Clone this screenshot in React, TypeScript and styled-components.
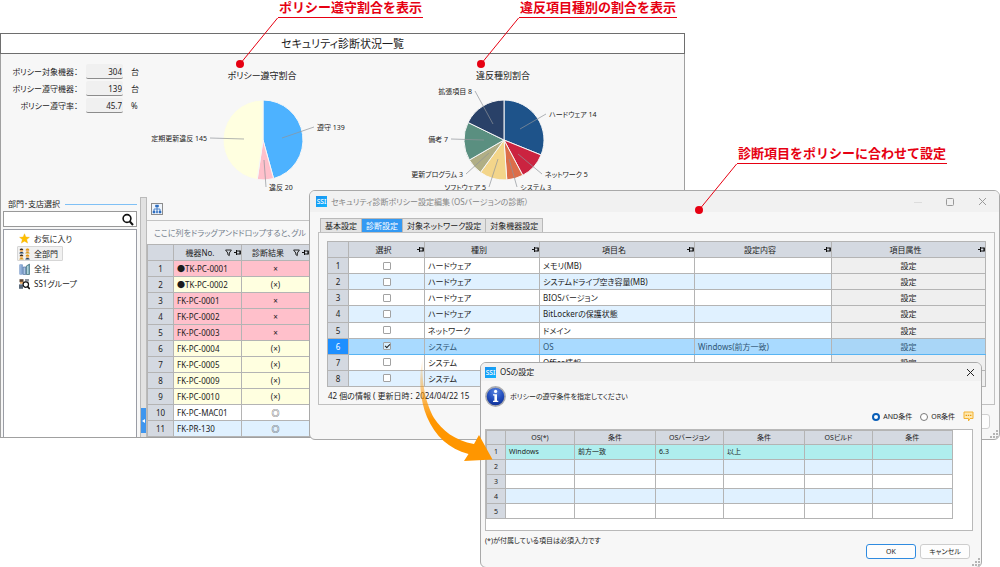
import React from "react";
import styled, { createGlobalStyle, css } from "styled-components";

const GlobalStyle = createGlobalStyle`
  *, *::before, *::after { box-sizing: border-box; }
  body { margin: 0; background: #fff; }
  body, table {
    font-family: "Noto Sans", "Noto Sans CJK JP", sans-serif;
    font-size: 8px;
    line-height: 12px;
    color: #1c1c1c;
    font-feature-settings: "palt";
  }
  table, button, input { font: inherit; color: inherit; font-feature-settings: inherit; }
  button { padding: 0; margin: 0; border: 0; background: none; }
  input { margin: 0; }
  h1, h2, p, ul { margin: 0; padding: 0; font-size: inherit; font-weight: 400; list-style: none; }
  svg { display: block; flex: none; }
`;

const c = {
  line: "#b4b4b4",
  head: "#d4d9e1",
  panel: "#f7f7f7",
  red: "#e60012",
};

const Desktop = styled.main`
  position: relative;
  min-height: 100vh;
  padding-top: 33px;
  overflow: hidden;
`;

/* ---------- main window ---------- */

const MainWindow = styled.section`
  width: 68.5%;
  border: 1px solid #a0a0a0;
  border-top: 0;
  background: ${c.panel};
`;

const MainTitle = styled.h1`
  margin: 0 -1px;
  border: 1px solid #6e6e6e;
  background: #fff;
  text-align: center;
  font-size: 11px;
  line-height: 19px;
`;

const Summary = styled.div`
  display: flex;
  height: 143px;
`;

const Stats = styled.div`
  display: flex;
  flex-direction: column;
  gap: 2px;
  width: 139px;
  padding-top: 10px;
`;

const Stat = styled.label`
  display: grid;
  grid-template-columns: 77px 37px 1fr;
  column-gap: 8px;
  align-items: center;
  text-align: right;

  input {
    width: 100%;
    height: 15px;
    padding: 0 1px;
    border: 0;
    border-bottom: 1px solid #8c8c8c;
    border-radius: 2px;
    background: #f0f0f0;
    text-align: right;
  }
  span:last-child { text-align: left; }
`;

const ChartBox = styled.figure<{ $width: number }>`
  width: ${(p) => p.$width}px;
  margin: 0;
  padding-top: 15px;
`;

const ChartTitle = styled.h2`
  font-size: 9px;
  line-height: 14px;
  text-align: center;
`;

const Lower = styled.div`
  display: grid;
  grid-template-columns: 139px 7px 1fr;
`;

const Side = styled.aside`
  display: flex;
  flex-direction: column;
  padding: 0 3px 0 2px;
`;

const SideHeading = styled.h2`
  display: flex;
  align-items: center;
  gap: 5px;
  padding-left: 5px;
  line-height: 14px;

  &::after {
    content: "";
    flex: 1;
    border-top: 1px solid #7fc0f5;
  }
`;

const SearchBox = styled.div`
  display: flex;
  align-items: center;
  height: 16px;
  padding-right: 2px;
  border: 1px solid #999;
  background: #fff;

  input {
    flex: 1;
    min-width: 0;
    border: 0;
    outline: 0;
    background: none;
  }
`;

const Tree = styled.ul`
  flex: 1;
  margin-top: 2px;
  padding: 1px 0 0 13px;
  border: 1px solid #9a9da5;
  border-bottom: 0;
  background: #fff;
`;

const TreeItem = styled.button<{ $selected?: boolean }>`
  display: flex;
  align-items: center;
  gap: 4px;
  height: 15px;
  padding: 0 4px 0 1px;
  border: 1px solid ${(p) => (p.$selected ? "#d6d6d6" : "transparent")};
  border-radius: 1px;
  background: ${(p) => (p.$selected ? "#f1f1f1" : "none")};
`;

const Splitter = styled.div`
  display: flex;
  flex-direction: column;
  justify-content: flex-end;
  padding-bottom: 4px;
  border: 1px solid #bbb;
  border-bottom: 0;
  background: #e2e2e2;
`;

const CollapseButton = styled.button`
  display: grid;
  place-items: center;
  height: 25px;
  background: #3f96ee;
`;

const Devices = styled.div`
  min-width: 0;
  overflow: hidden;
`;

const DeviceTools = styled.div`
  display: flex;
  height: 24px;
  padding: 6px 0 0 4px;
  border-bottom: 1px solid #c4c4c4;
`;

const ToolButton = styled.button`
  display: grid;
  place-items: center;
  width: 12px;
  height: 12px;
  border: 1px solid #8c8c8c;
  background: #eef4fb;
`;

const GroupHint = styled.p`
  padding-left: 7px;
  line-height: 23px;
  color: #74808c;
  white-space: nowrap;
`;

/* ---------- tables ---------- */

const Grid = styled.table<{ $height: number; $row: number; $width?: string }>`
  width: ${(p) => p.$width ?? "100%"};
  height: ${(p) => p.$height}px;
  table-layout: fixed;
  border-collapse: collapse;
  background: #fff;

  tr { height: ${(p) => p.$row}px; }
  th, td {
    padding: 0 3px;
    border: 1px solid ${c.line};
    line-height: 11px;
    font-weight: 400;
    text-align: left;
    white-space: nowrap;
    overflow: hidden;
  }
  th { background: ${c.head}; text-align: center; }
  th[scope="row"] { padding: 0; }
`;

const Row = styled.tr<{ $tone?: string; $selected?: boolean }>`
  background: ${(p) => p.$tone ?? "#fff"};

  ${(p) =>
    p.$selected &&
    css`
      background: #a9daff;
      td { border-top-color: #58b4f3; border-bottom-color: #58b4f3; color: #2f5675; }
      th[scope="row"] { background: #1e8fff; color: #fff; }
    `}
`;

const CenterCell = styled.td`
  && { text-align: center; }
`;

const ActionCell = styled.td<{ $selected?: boolean }>`
  && { padding: 0; background: ${(p) => (p.$selected ? "#a9d6f7" : "#efefef")}; }

  button { display: block; width: 100%; line-height: 11px; }
`;

const HeadLabel = styled.div`
  display: flex;
  align-items: center;
  gap: 2px;
  margin-right: -3px;

  span { flex: 1; }
`;

const Check = styled.input`
  appearance: none;
  display: block;
  width: 8px;
  height: 8px;
  margin: 0 auto;
  border: 1px solid #a2a2a2;
  border-radius: 1px;
  background: #fff;

  &:checked { background: #d8efff; }
  &:checked::after {
    content: "";
    display: block;
    width: 5px;
    height: 3px;
    margin: 1px;
    border: solid #222;
    border-width: 0 0 1px 1px;
    transform: rotate(-45deg);
  }
`;

/* ---------- dialogs ---------- */

const Dialog = styled.section`
  position: absolute;
  border: 1px solid #a9a9a9;
  border-radius: 6px;
  background: ${c.panel};
  overflow: hidden;
`;

const PolicyDialog = styled(Dialog)`
  top: 190px;
  left: 30.9%;
  right: 0;
  padding-bottom: 34px;
`;

const OsDialog = styled(Dialog)`
  top: 362px;
  left: 48%;
  right: 1.8%;
  font-size: 7px;
`;

const TitleBar = styled.header<{ $muted?: boolean }>`
  display: flex;
  align-items: center;
  gap: 4px;
  height: ${(p) => (p.$muted ? 21 : 18)}px;
  padding: 0 ${(p) => (p.$muted ? 11 : 5)}px 0 ${(p) => (p.$muted ? 6 : 4)}px;
  background: #f1f1f1;
  font-size: 8px;
  color: ${(p) => (p.$muted ? "#858585" : "#222")};

  h2 { flex: 1; }
`;

const WindowButton = styled.button`
  display: grid;
  place-items: center;
  width: 12px;
  height: 12px;
`;

const WindowButtons = styled.div`
  display: flex;
  gap: 20px;
`;

const Tabs = styled.div`
  display: flex;
  margin: 6px 0 0 10px;
`;

const Tab = styled.button<{ $active?: boolean }>`
  height: 14px;
  padding: 0 4px;
  border: solid #b9b9b9;
  border-width: 1px 1px 0 0;
  background: ${(p) => (p.$active ? "#3399f3" : "#e3e3e3")};
  color: ${(p) => (p.$active ? "#fff" : "#1c1c1c")};

  &:first-child { border-left-width: 1px; }
`;

const TabPanel = styled.div`
  margin: 0 4px 0 8px;
  padding: 8px 8px 0 8px;
  border: 1px solid #c0c0c0;
`;

const Status = styled.p`
  padding-left: 1px;
  line-height: 17px;
`;

const BackButton = styled.button`
  position: absolute;
  right: 9px;
  bottom: 10px;
  width: 50px;
  height: 15px;
  border: 1px solid #cfcfcf;
  border-radius: 3px;
  background: #fdfdfd;
`;

const Grip = styled.svg`
  position: absolute;
  right: 1px;
  bottom: 1px;
`;

const Message = styled.div`
  display: flex;
  align-items: center;
  gap: 4px;
  padding: 5px 4px 0;
`;

const Options = styled.div`
  display: flex;
  align-items: center;
  justify-content: flex-end;
  gap: 8px;
  height: 22px;
  padding: 0 7px 3px 0;

  label { display: flex; align-items: center; gap: 3px; }
`;

const Radio = styled.input`
  appearance: none;
  width: 8px;
  height: 8px;
  border: 1px solid #7a7a7a;
  border-radius: 50%;
  background: #fff;

  &:checked { border: 2px solid #0a5fb8; }
`;

const OsPanel = styled.div`
  margin: 0 8px 0 4px;
  padding-bottom: 11px;
  border: 1px solid #b9b9b9;
  background: #fff;
`;

const Note = styled.p`
  padding: 4px 4px 0;
`;

const Actions = styled.footer`
  display: flex;
  justify-content: flex-end;
  gap: 4px;
  margin-top: -3px;
  padding: 0 11px 8px;
`;

const ActionButton = styled.button<{ $primary?: boolean }>`
  width: 50px;
  height: 15px;
  border: 1px solid ${(p) => (p.$primary ? "#2f8be0" : "#cdcdcd")};
  border-radius: 3px;
  background: #fdfdfd;
`;

/* ---------- annotations ---------- */

const CalloutBox = styled.div<{ $left: string; $top: number }>`
  position: absolute;
  z-index: 3;
  left: ${(p) => p.$left};
  top: ${(p) => p.$top}px;
`;

const CalloutText = styled.p`
  margin-left: 42px;
  padding: 0 1px 3px;
  border-bottom: 1px solid ${c.red};
  color: ${c.red};
  font-size: 13px;
  font-weight: 700;
  line-height: 14px;
  white-space: nowrap;
  font-feature-settings: normal;
`;

const Arrow = styled.svg`
  position: absolute;
  z-index: 3;
  left: 41.8%;
  top: 356px;
`;

/* ---------- small drawings ---------- */

const Pin = () => (
  <svg width="7" height="7" viewBox="0 0 7 7" fill="none" stroke="#111">
    <path d="M0 3.5H2.5M2.5 1V6M2.5 2H6V5H2.5M6.3 1.5V5.5" />
  </svg>
);

const Funnel = () => (
  <svg width="7" height="8" viewBox="0 0 7 8" fill="none" stroke="#222">
    <path d="M.6 1H6.4L4.3 4V6.6L2.8 5.6V4Z" />
  </svg>
);

const Logo = ({ size }: { size: number }) => (
  <svg width={size} height={size} viewBox="0 0 11 11">
    <defs>
      <linearGradient id="logo" x1="0" y1="0" x2="1" y2="1">
        <stop offset="0" stopColor="#1a8fee" />
        <stop offset="1" stopColor="#12b6ff" />
      </linearGradient>
    </defs>
    <rect width="11" height="11" fill="url(#logo)" />
    <text x="5.5" y="8" textAnchor="middle" fontSize="6.5" fontWeight="500" fill="#fff">
      SSI
    </text>
  </svg>
);

const Close = ({ color }: { color: string }) => (
  <svg width="9" height="9" viewBox="0 0 9 9" stroke={color}>
    <path d="M1 1L8 8M8 1L1 8" />
  </svg>
);

const GripDots = () => (
  <Grip width="8" height="8" viewBox="0 0 8 8" fill="#b5b5b5">
    <path d="M6 0h2v2h-2zM3 3h2v2h-2zM6 3h2v2h-2zM0 6h2v2h-2zM3 6h2v2h-2zM6 6h2v2h-2z" />
  </Grip>
);

const SearchIcon = () => (
  <svg width="13" height="13" viewBox="0 0 13 13" fill="none" stroke="#111">
    <circle cx="6" cy="5.5" r="3.9" strokeWidth="1.6" />
    <path d="M8.8 8.5L12 12" strokeWidth="2" />
  </svg>
);

const StarIcon = () => (
  <svg width="11" height="11" viewBox="0 0 12 12" fill="#ffc000" stroke="#f0ae00" strokeWidth=".4">
    <path d="M6 .8L7.5 4.4L11.4 4.7L8.4 7.2L9.4 11L6 8.9L2.6 11L3.6 7.2L.6 4.7L4.5 4.4Z" />
  </svg>
);

const PeopleIcon = () => (
  <svg width="11" height="12" viewBox="0 0 11 12">
    {[0, 6].map((x) =>
      [0, 6].map((y) => (
        <g key={`${x}-${y}`} transform={`translate(${x} ${y})`}>
          <path d="M.3 5.6C.3 3.6 4.7 3.6 4.7 5.6Z" fill={x === y ? "#27405e" : "#d99a1c"} />
          <circle cx="2.5" cy="2.4" r="1.7" fill="#e9b06a" />
          <path d="M.7 2.1C.7-.1 4.3-.1 4.3 2.1Z" fill={x ? "#e39a12" : "#3a2a1c"} />
        </g>
      ))
    )}
  </svg>
);

const CompanyIcon = () => (
  <svg width="11" height="12" viewBox="0 0 11 12">
    <path d="M.5 1.5h3.2v10H.5z" fill="#4d79b8" />
    <path d="M1.5 2v9M2.7 2v9" stroke="#c9dcf2" strokeWidth=".6" />
    <path d="M4.2 4h2.5v7.5H4.2z" fill="#a9c4e4" stroke="#3c5f94" strokeWidth=".6" />
    <path d="M7.3 3L10.5 1v10.5H7.3z" fill="#6fa7b8" stroke="#2d5a66" strokeWidth=".6" />
    <path d="M8.8 3v8" stroke="#e4f3f5" strokeWidth=".8" />
  </svg>
);

const GroupIcon = () => (
  <svg width="11" height="12" viewBox="0 0 11 12">
    <path d="M.5 1.2h4v3h-4z" fill="#574130" />
    <path d="M1 3.8h3.2v2H1z" fill="#e2a868" />
    <path d="M0 6.4h4v4.4H0z" fill="#5a6a7c" />
    <path d="M6 1h4v2.5H6z" fill="#8e949c" />
    <circle cx="6.8" cy="6.6" r="2.7" fill="#fff" stroke="#111" strokeWidth="1.2" />
    <path d="M8.6 8.6L10.8 11" stroke="#111" strokeWidth="1.6" />
  </svg>
);

const InfoIcon = () => (
  <svg width="21" height="21" viewBox="0 0 21 21">
    <defs>
      <radialGradient id="info" cx=".5" cy=".25" r=".8">
        <stop offset="0" stopColor="#5b86e0" />
        <stop offset=".5" stopColor="#2450bf" />
        <stop offset="1" stopColor="#0c2a8c" />
      </radialGradient>
    </defs>
    <circle cx="10.5" cy="10.5" r="9.6" fill="url(#info)" stroke="#a9abb0" strokeWidth="1.6" />
    <circle cx="10.6" cy="5.4" r="1.6" fill="#fff" />
    <path d="M8 8.2H12V14.8H13.3V16H8V14.8H9.4V9.4H8Z" fill="#fff" />
  </svg>
);

const ChatIcon = () => (
  <svg width="11" height="11" viewBox="0 0 11 11">
    <path d="M1 1H10V7.5H7L5.5 10V7.5H1Z" fill="#ffe9b0" stroke="#f2b233" strokeLinejoin="round" />
    <path d="M2.6 4.3h1.4M4.8 4.3h1.4M7 4.3h1.4" stroke="#e89a10" strokeWidth="1.3" />
  </svg>
);

/* ---------- charts ---------- */

type Slice = {
  label: string;
  value: number;
  color: string;
  from: [number, number];
  to: [number, number];
};

function Pie({ slices, viewBox, cx, cy, r }: { slices: Slice[]; viewBox: [number, number, number, number]; cx: number; cy: number; r: number }) {
  const total = slices.reduce((sum, s) => sum + s.value, 0);
  const at = (v: number) => {
    const a = (v / total) * Math.PI * 2;
    return `${(cx + r * Math.sin(a)).toFixed(2)} ${(cy - r * Math.cos(a)).toFixed(2)}`;
  };
  let acc = 0;
  return (
    <svg width={viewBox[2]} height={viewBox[3]} viewBox={viewBox.join(" ")}>
      {slices.map((s) => {
        const start = acc;
        acc += s.value;
        const large = s.value / total > 0.5 ? 1 : 0;
        return (
          <path
            key={s.label}
            d={`M${cx} ${cy}L${at(start)}A${r} ${r} 0 ${large} 1 ${at(acc)}Z`}
            fill={s.color}
            stroke="#f7f7f7"
            strokeWidth="1"
          />
        );
      })}
      {slices.map((s) => {
        const right = s.to[0] > cx;
        return (
          <g key={s.label}>
            <path d={`M${s.from.join(" ")}L${s.to.join(" ")}`} stroke="#8f9499" strokeWidth=".7" />
            <text x={s.to[0] + (right ? 3 : -3)} y={s.to[1] + 3} fontSize="7" fill="#1c1c1c" textAnchor={right ? "start" : "end"}>
              {s.label} {s.value}
            </text>
          </g>
        );
      })}
    </svg>
  );
}

const complianceSlices: Slice[] = [
  { label: "遵守", value: 139, color: "#4db2ff", from: [282, 138], to: [314, 127] },
  { label: "違反", value: 20, color: "#ffc0cb", from: [264, 160], to: [266, 187] },
  { label: "定期更新違反", value: 145, color: "#ffffe0", from: [244, 139], to: [210, 138] },
];

const violationSlices: Slice[] = [
  { label: "ハードウェア", value: 14, color: "#1e538a", from: [520, 129], to: [546, 114] },
  { label: "ネットワーク", value: 5, color: "#cb2340", from: [518, 154], to: [542, 174] },
  { label: "システム", value: 3, color: "#dc6e49", from: [509, 159], to: [517, 187] },
  { label: "ソフトウェア", value: 5, color: "#f3d58a", from: [498, 159], to: [489, 187] },
  { label: "更新プログラム", value: 3, color: "#b0ae85", from: [489, 153], to: [466, 174] },
  { label: "備考", value: 7, color: "#5a8f80", from: [484, 140], to: [451, 139] },
  { label: "拡張項目", value: 8, color: "#294168", from: [493, 124], to: [475, 91] },
];

/* ---------- data ---------- */

const stats = [
  ["ポリシー対象機器：", "304", "台"],
  ["ポリシー遵守機器：", "139", "台"],
  ["ポリシー遵守率：", "45.7", "%"],
];

const PINK = "#ffc0cb";
const CREAM = "#ffffe0";
const SKY = "#e0f1ff";

const devices: [string, string, string][] = [
  ["●TK-PC-0001", "×", PINK],
  ["●TK-PC-0002", "(×)", CREAM],
  ["FK-PC-0001", "×", PINK],
  ["FK-PC-0002", "×", PINK],
  ["FK-PC-0003", "×", PINK],
  ["FK-PC-0004", "(×)", CREAM],
  ["FK-PC-0005", "(×)", CREAM],
  ["FK-PC-0009", "(×)", CREAM],
  ["FK-PC-0010", "(×)", CREAM],
  ["FK-PC-MAC01", "◎", "#fff"],
  ["FK-PR-130", "◎", SKY],
];

const policies: [string, string, string][] = [
  ["ハードウェア", "メモリ(MB)", ""],
  ["ハードウェア", "システムドライブ空き容量(MB)", ""],
  ["ハードウェア", "BIOSバージョン", ""],
  ["ハードウェア", "BitLockerの保護状態", ""],
  ["ネットワーク", "ドメイン", ""],
  ["システム", "OS", "Windows(前方一致)"],
  ["システム", "Office情報", ""],
  ["システム", "", ""],
];

const osRows = [["Windows", "前方一致", "6.3", "以上", "", ""], [], [], [], []];

function Callout({ left, top, children }: { left: string; top: number; children: string }) {
  return (
    <CalloutBox $left={left} $top={top}>
      <CalloutText>{children}</CalloutText>
      <svg width="46" height="51" viewBox="0 1 46 51">
        <path d="M42 .5L4 47" stroke={c.red} />
        <circle cx="4" cy="47" r="4" fill={c.red} />
      </svg>
    </CalloutBox>
  );
}

export default function App() {
  return (
    <Desktop>
      <GlobalStyle />

      <MainWindow>
        <MainTitle>セキュリティ診断状況一覧</MainTitle>
        <Summary>
          <Stats>
            {stats.map(([label, value, unit]) => (
              <Stat key={label}>
                <span>{label}</span>
                <input readOnly value={value} />
                <span>{unit}</span>
              </Stat>
            ))}
          </Stats>
          <ChartBox $width={244}>
            <ChartTitle>ポリシー遵守割合</ChartTitle>
            <Pie slices={complianceSlices} viewBox={[140, 83, 244, 112]} cx={263} cy={140} r={40} />
          </ChartBox>
          <ChartBox $width={238}>
            <ChartTitle>違反種別割合</ChartTitle>
            <Pie slices={violationSlices} viewBox={[384, 83, 238, 112]} cx={504} cy={140} r={40} />
          </ChartBox>
        </Summary>

        <Lower>
          <Side>
            <SideHeading>部門･支店選択</SideHeading>
            <SearchBox>
              <input type="text" aria-label="検索" />
              <SearchIcon />
            </SearchBox>
            <Tree>
              <li><TreeItem><StarIcon />お気に入り</TreeItem></li>
              <li><TreeItem $selected><PeopleIcon />全部門</TreeItem></li>
              <li><TreeItem><CompanyIcon />全社</TreeItem></li>
              <li><TreeItem><GroupIcon />SS1グループ</TreeItem></li>
            </Tree>
          </Side>
          <Splitter>
            <CollapseButton aria-label="閉じる">
              <svg width="4" height="6" viewBox="0 0 4 6"><path d="M0 3L3 1V5Z" fill="#fff" /></svg>
            </CollapseButton>
          </Splitter>
          <Devices>
            <DeviceTools>
              <ToolButton aria-label="階層">
                <svg width="10" height="10" viewBox="0 0 10 10" fill="#2f6fc0" stroke="#2f6fc0">
                  <path d="M3.5 1h3v2h-3zM1 7h2v2H1zM4.5 7h1v2h-1zM7 7h2v2H7z" strokeWidth=".5" />
                  <path d="M5 3V7M2 7V5H8V7" fill="none" strokeWidth=".8" />
                </svg>
              </ToolButton>
            </DeviceTools>
            <GroupHint>ここに列をドラッグアンドドロップすると、グル</GroupHint>
            <Grid $height={193} $row={16} $width="162px">
              <colgroup><col width="26" /><col width="68" /><col width="68" /></colgroup>
              <thead>
                <tr>
                  <th />
                  <th><HeadLabel><span>機器No.</span><Funnel /><Pin /></HeadLabel></th>
                  <th><HeadLabel><span>診断結果</span><Funnel /><Pin /></HeadLabel></th>
                </tr>
              </thead>
              <tbody>
                {devices.map(([name, result, tone], i) => (
                  <Row key={name} $tone={tone}>
                    <th scope="row">{i + 1}</th>
                    <td>{name}</td>
                    <CenterCell>{result}</CenterCell>
                  </Row>
                ))}
              </tbody>
            </Grid>
          </Devices>
        </Lower>
      </MainWindow>

      <PolicyDialog>
        <TitleBar $muted>
          <Logo size={11} />
          <h2>セキュリティ診断ポリシー設定編集（OSバージョンの診断）</h2>
          <WindowButtons>
            <WindowButton aria-label="最小化">
              <svg width="8" height="8" viewBox="0 0 8 8" stroke="#dcdcdc"><path d="M0 4.5H8" /></svg>
            </WindowButton>
            <WindowButton aria-label="最大化">
              <svg width="8" height="8" viewBox="0 0 8 8" fill="none" stroke="#9a9a9a"><rect x=".5" y=".5" width="7" height="7" rx="1" /></svg>
            </WindowButton>
            <WindowButton aria-label="閉じる"><Close color="#9a9a9a" /></WindowButton>
          </WindowButtons>
        </TitleBar>
        <Tabs role="tablist">
          <Tab role="tab">基本設定</Tab>
          <Tab role="tab" $active>診断設定</Tab>
          <Tab role="tab">対象ネットワーク設定</Tab>
          <Tab role="tab">対象機器設定</Tab>
        </Tabs>
        <TabPanel>
          <Grid $height={146} $row={16}>
            <colgroup>
              <col width="21" /><col width="76" /><col width="115" /><col width="155" /><col width="137" /><col />
            </colgroup>
            <thead>
              <tr>
                <th />
                {["選択", "種別", "項目名", "設定内容", "項目属性"].map((h) => (
                  <th key={h}><HeadLabel><span>{h}</span><Pin /></HeadLabel></th>
                ))}
              </tr>
            </thead>
            <tbody>
              {policies.map(([kind, name, content], i) => {
                const selected = i === 5;
                return (
                  <Row key={i} $tone={i % 2 ? SKY : "#fff"} $selected={selected}>
                    <th scope="row">{i + 1}</th>
                    <td><Check type="checkbox" aria-label={`${kind} ${name}`} defaultChecked={selected} /></td>
                    <td>{kind}</td>
                    <td>{name}</td>
                    <td>{content}</td>
                    <ActionCell $selected={selected}><button>設定</button></ActionCell>
                  </Row>
                );
              })}
            </tbody>
          </Grid>
          <Status>42 個の情報 ( 更新日時： 2024/04/22 15</Status>
        </TabPanel>
        <BackButton aria-label="キャンセル" />
        <GripDots />
      </PolicyDialog>

      <OsDialog>
        <TitleBar>
          <Logo size={11} />
          <h2>OSの設定</h2>
          <WindowButton aria-label="閉じる"><Close color="#222" /></WindowButton>
        </TitleBar>
        <Message>
          <InfoIcon />
          <p>ポリシーの遵守条件を指定してください</p>
        </Message>
        <Options>
          <label><Radio type="radio" name="join" defaultChecked />AND条件</label>
          <label><Radio type="radio" name="join" />OR条件</label>
          <ChatIcon />
        </Options>
        <OsPanel>
          <Grid $height={89} $row={14} $width="96%">
            <colgroup>
              <col width="19" /><col width="69" /><col width="81" /><col width="68" /><col width="81" /><col width="68" /><col />
            </colgroup>
            <thead>
              <tr>
                <th />
                {["OS(*)", "条件", "OSバージョン", "条件", "OSビルド", "条件"].map((h, i) => (
                  <th key={i}>{h}</th>
                ))}
              </tr>
            </thead>
            <tbody>
              {osRows.map((cells, i) => (
                <Row key={i} $tone={i === 0 ? "#afeeee" : i % 2 ? SKY : "#fff"}>
                  <th scope="row">{i + 1}</th>
                  {[0, 1, 2, 3, 4, 5].map((j) => (
                    <td key={j}>{cells[j] ?? ""}</td>
                  ))}
                </Row>
              ))}
            </tbody>
          </Grid>
        </OsPanel>
        <Note>(*)が付属している項目は必須入力です</Note>
        <Actions>
          <ActionButton $primary>OK</ActionButton>
          <ActionButton>キャンセル</ActionButton>
        </Actions>
        <GripDots />
      </OsDialog>

      <Arrow width="76" height="108" viewBox="418 356 76 108">
        <defs>
          <linearGradient id="arrow" x1="0" y1="0" x2="0" y2="1">
            <stop offset="0" stopColor="#ff9600" stopOpacity="0" />
            <stop offset=".25" stopColor="#ff9600" stopOpacity=".4" />
            <stop offset=".6" stopColor="#ff9600" />
          </linearGradient>
        </defs>
        <path
          d="M423 357C418 378 420 400 427 417C435 436 449 449 468.500 454L464 461L492.500 459.500L479 435L474 444C455 441 442 430 434 418C426 403 421 385 423 357Z"
          fill="url(#arrow)"
        />
      </Arrow>

      <Callout left="23.6%" top={0}>ポリシー遵守割合を表示</Callout>
      <Callout left="47.7%" top={0}>違反項目種別の割合を表示</Callout>
      <Callout left="69.5%" top={146}>診断項目をポリシーに合わせて設定</Callout>
    </Desktop>
  );
}
